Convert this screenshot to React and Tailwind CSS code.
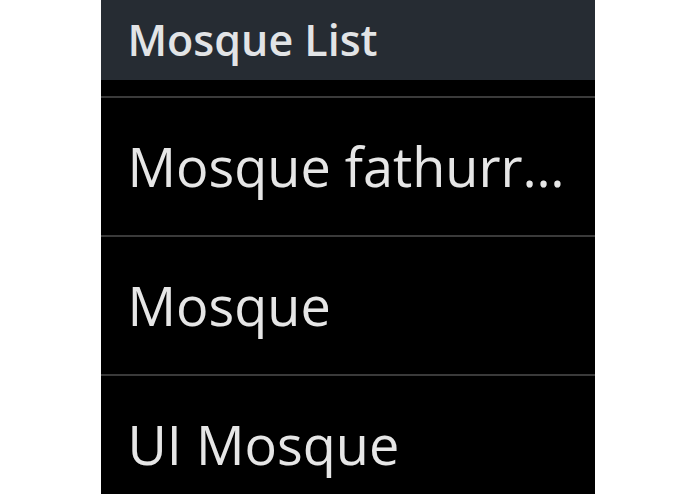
import React from 'react';

const mosques = ['Mosque fathurrahman', 'Mosque', 'UI Mosque'];

const App = () => {
    return (
        <div className="w-[695px] h-[494px] bg-white overflow-hidden flex justify-center">
            <div className="w-[494px] h-full bg-black flex flex-col" style={{ fontFamily: '"Open Sans", "Noto Sans", sans-serif' }}>
                {/* Header */}
                <div className="h-[80px] shrink-0 bg-[#262c33] flex items-center px-[27px]">
                    <h1 className="text-[43px] font-semibold text-[#e2e4e6] leading-tight">Mosque List</h1>
                </div>
                <div className="h-[18px] shrink-0 border-b-2 border-[#3a3a3a]" />

                {/* List */}
                {mosques.map((name) => (
                    <div key={name} className="h-[139px] shrink-0 border-b-2 border-[#3a3a3a] flex items-center pl-[27px] pr-[26px]">
                        <span className="block min-w-0 text-[54px] text-[#e6e6e6] leading-[1.5] truncate">{name}</span>
                    </div>
                ))}
            </div>
        </div>
    );
};

export default App;
